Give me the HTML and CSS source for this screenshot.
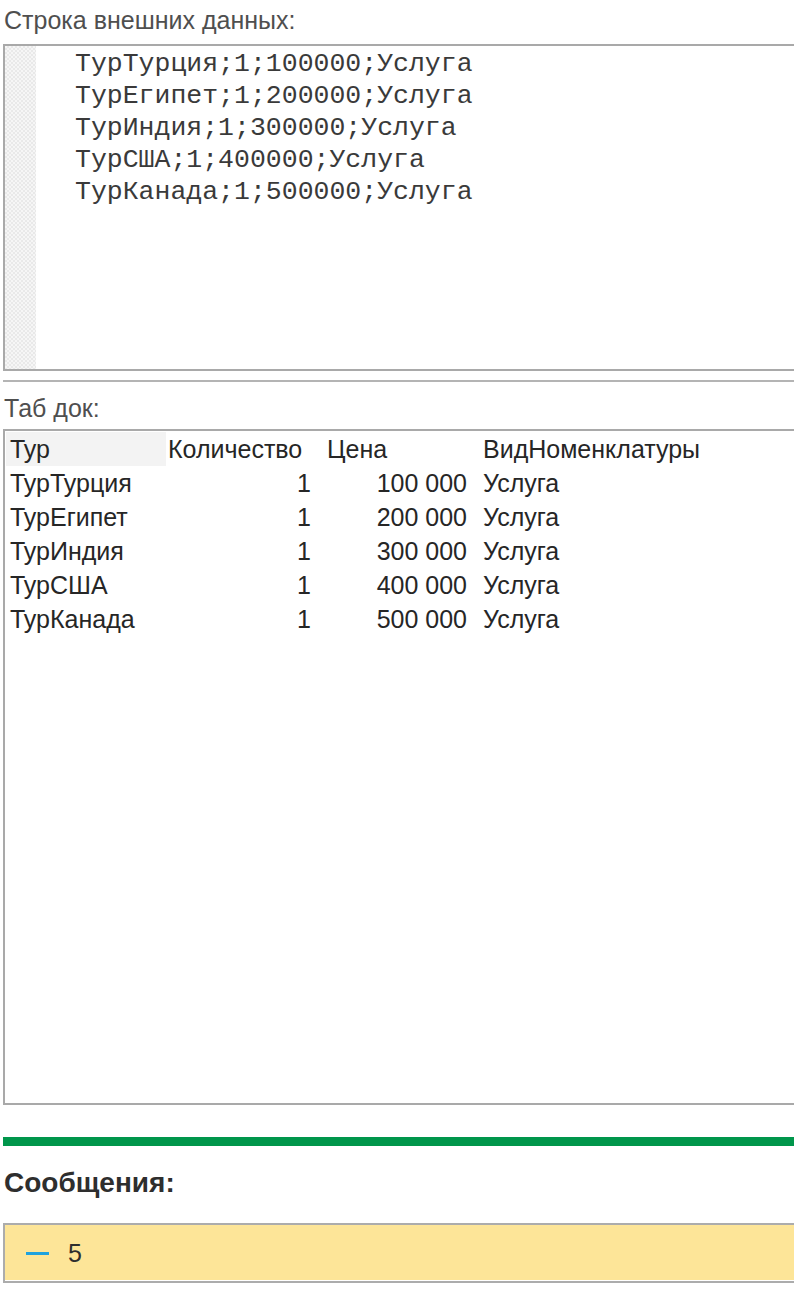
FILE: index.html
```html
<!DOCTYPE html>
<html lang="ru">
<head>
<meta charset="utf-8">
<link rel="stylesheet" href="styles.css">
</head>
<body>
<div class="page">
  <div class="label top-label">Строка внешних данных:</div>
  <div class="textbox">
    <div class="gutter"></div>
    <pre class="code">ТурТурция;1;100000;Услуга
ТурЕгипет;1;200000;Услуга
ТурИндия;1;300000;Услуга
ТурСША;1;400000;Услуга
ТурКанада;1;500000;Услуга</pre>
  </div>
  <div class="separator"></div>
  <div class="label tab-label">Таб док:</div>
  <div class="tablebox">
    <div class="grid">
      <div class="cell c1 head first">Тур</div>
      <div class="cell c2 head">Количество</div>
      <div class="cell c3 head">Цена</div>
      <div class="cell c4 head">ВидНоменклатуры</div>

      <div class="cell c1">ТурТурция</div><div class="cell c2 num">1</div><div class="cell c3 num">100 000</div><div class="cell c4">Услуга</div>
      <div class="cell c1">ТурЕгипет</div><div class="cell c2 num">1</div><div class="cell c3 num">200 000</div><div class="cell c4">Услуга</div>
      <div class="cell c1">ТурИндия</div><div class="cell c2 num">1</div><div class="cell c3 num">300 000</div><div class="cell c4">Услуга</div>
      <div class="cell c1">ТурСША</div><div class="cell c2 num">1</div><div class="cell c3 num">400 000</div><div class="cell c4">Услуга</div>
      <div class="cell c1">ТурКанада</div><div class="cell c2 num">1</div><div class="cell c3 num">500 000</div><div class="cell c4">Услуга</div>
    </div>
  </div>
  <div class="greenbar"></div>
  <div class="msg-title">Сообщения:</div>
  <div class="msgbox">
    <span class="dash"></span>
    <span class="msg-text">5</span>
  </div>
</div>
</body>
</html>
```
FILE: styles.css
```css
html, body {
  margin: 0;
  padding: 0;
  background: #ffffff;
  overflow: hidden;
}
.page {
  width: 830px;
  padding-left: 3px;
  font-family: "Liberation Sans", Arial, sans-serif;
  color: #333333;
}
.label {
  font-size: 25px;
  color: #4f4f4f;
  padding-left: 1px;
  white-space: nowrap;
}
.top-label {
  height: 44px;
  line-height: 40px;
}
.textbox {
  height: 323px;
  border: 2px solid #a9a9a9;
  display: flex;
  background: #ffffff;
}
.gutter {
  width: 31px;
  flex: none;
  background-color: #f6f6f6;
  background-image:
    linear-gradient(45deg, #e9e9e9 25%, transparent 25%, transparent 75%, #e9e9e9 75%),
    linear-gradient(45deg, #e9e9e9 25%, transparent 25%, transparent 75%, #e9e9e9 75%);
  background-size: 4px 4px;
  background-position: 0 0, 2px 2px;
}
.code {
  margin: 0;
  padding: 2px 0 0 39px;
  font-family: "Liberation Mono", "Courier New", monospace;
  font-size: 26.5px;
  line-height: 32px;
  color: #3a3a3a;
}
.separator {
  height: 2px;
  background: #b4b4b4;
  margin-top: 9px;
}
.tab-label {
  height: 47px;
  line-height: 52px;
}
.tablebox {
  height: 671px;
  border: 2px solid #a9a9a9;
  padding: 1px 0 0 1px;
}
.grid {
  display: grid;
  grid-template-columns: 160px 152px 159px 320px;
  grid-auto-rows: 34px;
  font-size: 25px;
  line-height: 34px;
  color: #262626;
}
.cell {
  white-space: nowrap;
}
.c1 {
  padding-left: 4px;
}
.c2 {
  padding-left: 2px;
}
.c3 {
  padding-left: 9px;
}
.c4 {
  padding-left: 6px;
}
.c2.num {
  text-align: right;
  padding-right: 7px;
}
.c3.num {
  text-align: right;
  padding-right: 10px;
}
.cell.first {
  background: #f3f3f3;
}
.greenbar {
  height: 9px;
  background: #00964b;
  margin-top: 32px;
}
.msg-title {
  font-size: 28px;
  font-weight: bold;
  color: #2e2e2e;
  height: 77px;
  line-height: 74px;
  padding-left: 1px;
}
.msgbox {
  height: 56px;
  background: #fde598;
  border: 2px solid #acacac;
  box-shadow: inset 0 -1px 0 #ffffff;
  display: flex;
  align-items: center;
  padding-left: 21px;
}
.dash {
  width: 23px;
  height: 3px;
  background: #1fa2de;
  margin-right: 19px;
}
.msg-text {
  font-size: 25px;
  color: #2e2e2e;
}
```
